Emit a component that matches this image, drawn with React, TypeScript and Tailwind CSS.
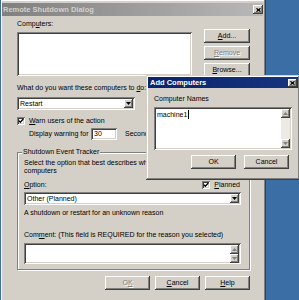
import React from "react";

const RAISED =
  "bg-[#d4d0c8] shadow-[inset_-1px_-1px_#404040,inset_1px_1px_#ffffff,inset_-2px_-2px_#808080]";
const SUNKEN =
  "bg-white shadow-[inset_1px_1px_#808080,inset_-1px_-1px_#ffffff,inset_2px_2px_#404040,inset_-2px_-2px_#d4d0c8]";
const DISABLED = "text-[#808080] [text-shadow:1px_1px_0_#ffffff]";

function U({ children }: { children: React.ReactNode }) {
  return <span className="underline underline-offset-[1px]">{children}</span>;
}

function Button({
  children,
  disabled,
  className = "",
}: {
  children: React.ReactNode;
  disabled?: boolean;
  className?: string;
}) {
  return (
    <div
      className={`${RAISED} flex items-center justify-center h-[14px] leading-[10px] ${
        disabled ? DISABLED : ""
      } ${className}`}
    >
      {children}
    </div>
  );
}

function Tri({ up, gray }: { up?: boolean; gray?: boolean }) {
  return (
    <svg width="5" height="3" viewBox="0 0 5 3">
      <polygon points={up ? "2.5,0 5,3 0,3" : "0,0 5,0 2.5,3"} fill={gray ? "#808080" : "#000"} />
    </svg>
  );
}

function ArrowBtn({ up, gray, className = "" }: { up?: boolean; gray?: boolean; className?: string }) {
  return (
    <div className={`${RAISED} flex items-center justify-center shrink-0 ${className}`}>
      <Tri up={up} gray={gray} />
    </div>
  );
}

function Select({ value, className = "" }: { value: string; className?: string }) {
  return (
    <div className={`${SUNKEN} flex items-stretch h-[13px] p-[2px] ${className}`}>
      <span className="flex-1 pl-[1px] leading-[9px]">{value}</span>
      <ArrowBtn className="w-[9px]" />
    </div>
  );
}

function Check() {
  return (
    <div className={`${SUNKEN} w-[8px] h-[8px] flex items-center justify-center shrink-0`}>
      <svg width="6" height="6" viewBox="0 0 6 6">
        <path d="M0.8 2.6 L2.3 4.2 L5.3 1" stroke="#000" strokeWidth="1.3" fill="none" />
      </svg>
    </div>
  );
}

function CloseBtn({ className = "" }: { className?: string }) {
  return (
    <div className={`${RAISED} flex items-center justify-center shrink-0 ${className}`}>
      <svg width="5" height="4" viewBox="0 0 5 4">
        <path d="M0.5 0.3 L4.5 3.7 M4.5 0.3 L0.5 3.7" stroke="#000" strokeWidth="1.2" />
      </svg>
    </div>
  );
}

function ScrollBar() {
  return (
    <div className="w-[9px] flex flex-col shrink-0">
      <ArrowBtn up gray className="h-[9px]" />
      <div className="flex-1 bg-[#eceae4]" />
      <ArrowBtn gray className="h-[9px]" />
    </div>
  );
}

export default function App() {
  return (
    <div className="relative w-[299px] h-[300px] overflow-hidden bg-[#3a6ea5] font-['Liberation_Sans',Arial,sans-serif] text-[7px] text-black">
      {/* Remote Shutdown Dialog (inactive) */}
      <div className="absolute left-[1px] top-0 w-[265px] h-[300px] bg-[#d4d0c8] pt-[3px] pl-[1px] pr-[3px] shadow-[inset_-1px_0_#404040,inset_-2px_0_#808080,inset_1px_1px_#ffffff]">
        <div className="h-[13px] flex items-center justify-between bg-linear-to-r from-[#808080] to-[#b8b8b8] pl-[1px]">
          <span className="font-bold text-[7.5px] text-[#d4d0c8] leading-[10px]">Remote Shutdown Dialog</span>
          <CloseBtn className="w-[10px] h-[9px]" />
        </div>

        <div className="pl-[15px] pr-[13px] flex flex-col">
          <div className="mt-[3px] leading-[10px]">
            Comp<U>u</U>ters:
          </div>
          <div className="flex">
            <div className={`${SUNKEN} mt-[3px] h-[44px] w-[175px]`} />
            <div className="ml-[12px] flex flex-col gap-[3px] w-[46px]">
              <Button>
                <U>A</U>dd...
              </Button>
              <Button disabled>
                <U>R</U>emove
              </Button>
              <Button>
                <U>B</U>rowse...
              </Button>
            </div>
          </div>

          <div className="mt-[6px] leading-[10px]">
            What do you want these computers to <U>d</U>o:
          </div>
          <Select value="Restart" className="mt-[4px] w-[118px]" />

          <div className="mt-[6px] h-[10px] flex items-center gap-[4px]">
            <Check />
            <span className="leading-[10px]">
              <U>W</U>arn users of the action
            </span>
          </div>
          <div className="mt-[2px] h-[12px] flex items-center pl-[12px]">
            <span className="leading-[10px] w-[62px]">Display warning for</span>
            <div className={`${SUNKEN} w-[26px] h-[12px] pl-[3px] leading-[12px]`}>30</div>
            <span className="ml-[8px] leading-[10px] w-[21px] overflow-hidden whitespace-nowrap">Seconds</span>
          </div>

          {/* Shutdown Event Tracker group */}
          <div className="relative mt-[12px] border border-[#808080] shadow-[inset_1px_1px_#ffffff,1px_1px_#ffffff] pt-[6px] pl-[6px] pr-[8px] pb-[5px]">
            <span className="absolute left-[4px] top-[-6px] bg-[#d4d0c8] px-[1px] leading-[10px]">
              Shutdown Event Tracker
            </span>
            <div className="leading-[8px] whitespace-nowrap w-[122px] overflow-hidden">
              Select the option that best describes why you want to shut down these
              <br />
              computers
            </div>
            <div className="mt-[5px] h-[10px] flex items-center justify-between">
              <span className="leading-[10px]">
                <U>O</U>ption:
              </span>
              <div className="flex items-center gap-[4px] pr-[1px]">
                <Check />
                <span className="leading-[10px]">
                  <U>P</U>lanned
                </span>
              </div>
            </div>
            <Select value="Other (Planned)" className="mt-[2px]" />
            <div className="mt-[3px] leading-[10px]">A shutdown or restart for an unknown reason</div>
            <div className="mt-[12px] leading-[10px] whitespace-nowrap">
              Com<U>m</U>ent: (This field is REQUIRED for the reason you selected)
            </div>
            <div className={`${SUNKEN} mt-[3px] h-[21px] p-[2px] flex`}>
              <div className="flex-1" />
              <ScrollBar />
            </div>
          </div>

          <div className="mt-[6px] flex justify-end gap-[5px]">
            <Button disabled className="w-[45px]">
              O<U>K</U>
            </Button>
            <Button className="w-[45px]">
              <U>C</U>ancel
            </Button>
            <Button className="w-[45px]">
              <U>H</U>elp
            </Button>
          </div>
        </div>
      </div>

      {/* Add Computers (active) */}
      <div className="absolute left-[146px] top-[75px] w-[154px] h-[105px] bg-[#d4d0c8] p-[2px] shadow-[inset_-1px_-1px_#404040,inset_1px_1px_#d4d0c8,inset_-2px_-2px_#808080,inset_2px_2px_#ffffff]">
        <div className="h-[11px] flex items-center justify-between bg-linear-to-r from-[#0a246a] to-[#16347e] pl-[2px] pr-[1px]">
          <span className="font-bold text-[7.5px] text-white leading-[10px]">Add Computers</span>
          <CloseBtn className="w-[9px] h-[8px]" />
        </div>
        <div className="px-[6px] flex flex-col">
          <div className="mt-[6px] leading-[10px]">Computer Names</div>
          <div className={`${SUNKEN} mt-[3px] h-[43px] p-[2px] flex`}>
            <div className="flex-1 pl-[1px] pt-[1px] leading-[10px] flex items-start">
              <span>machine1</span>
              <span className="w-[1px] h-[9px] bg-black ml-[1px]" />
            </div>
            <ScrollBar />
          </div>
          <div className="mt-[5px] flex justify-end gap-[8px] pr-[3px]">
            <Button className="w-[45px]">OK</Button>
            <Button className="w-[45px]">Cancel</Button>
          </div>
        </div>
      </div>
    </div>
  );
}
